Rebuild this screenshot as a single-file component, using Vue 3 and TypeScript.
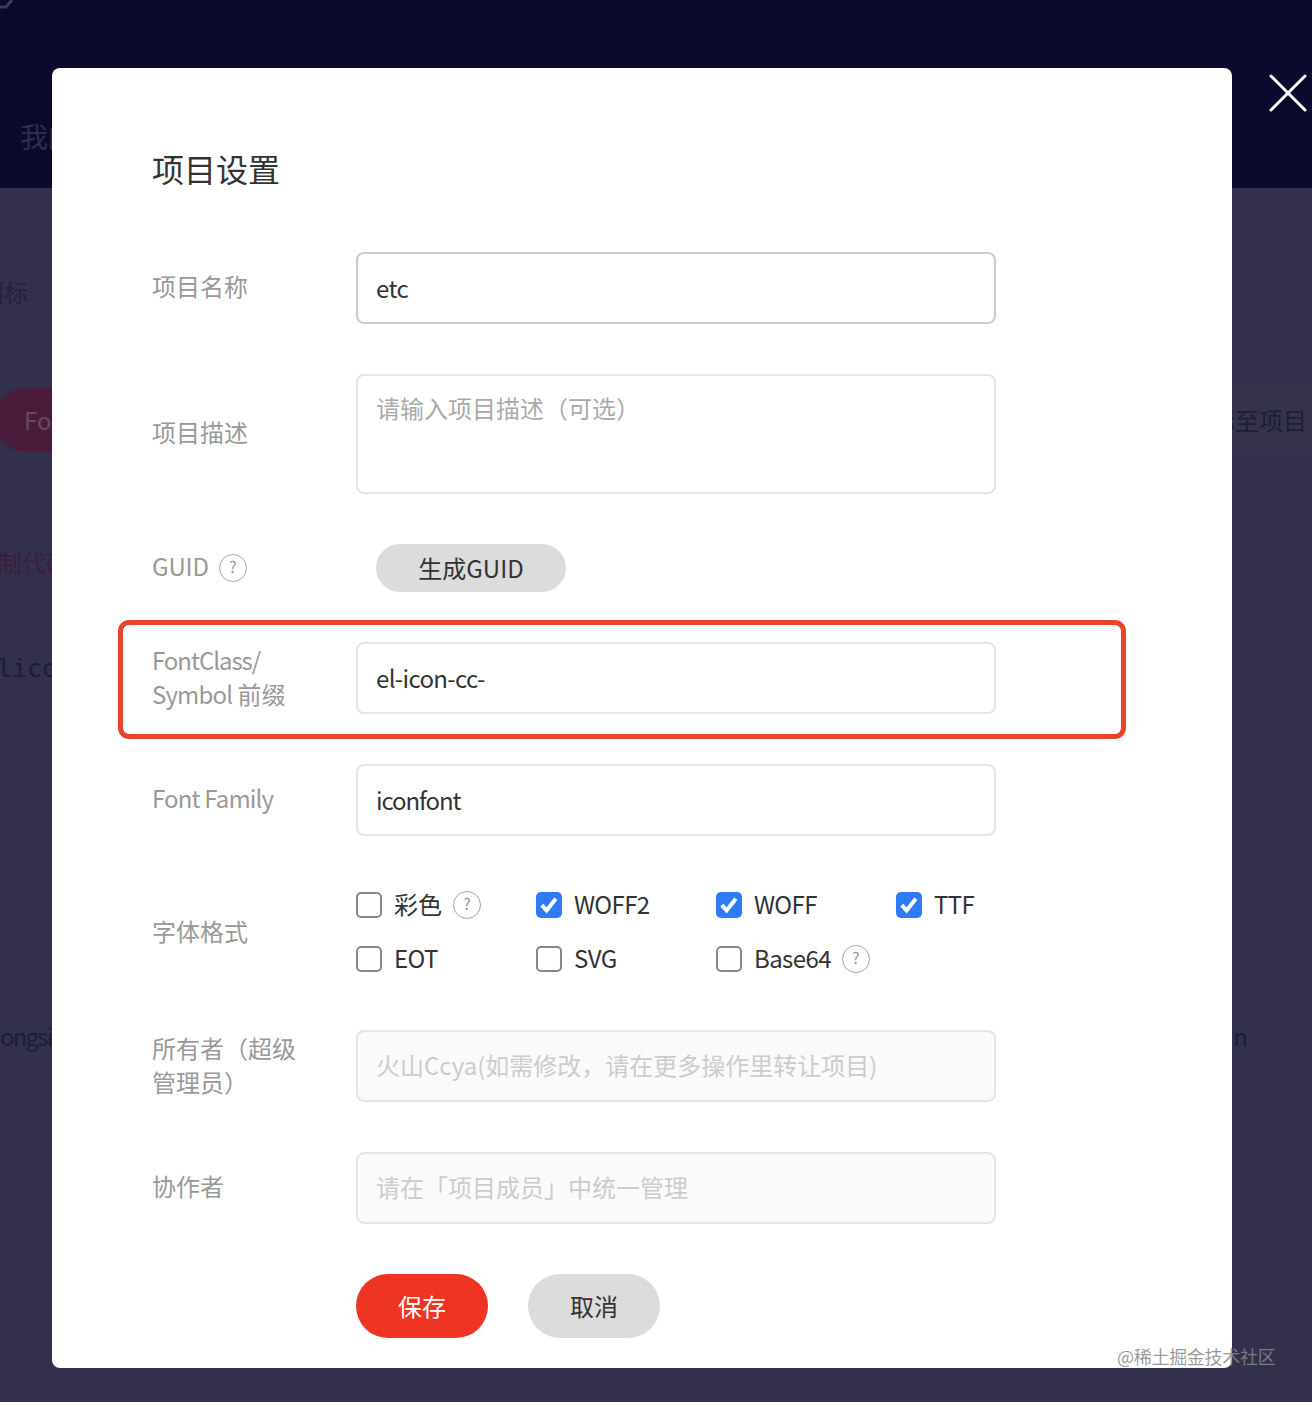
<script setup lang="ts">
import { ref } from 'vue'

interface Format {
  label: string
  checked: boolean
  help?: boolean
}

const formats = ref<Format[]>([
  { label: '彩色', checked: false, help: true },
  { label: 'WOFF2', checked: true },
  { label: 'WOFF', checked: true },
  { label: 'TTF', checked: true },
  { label: 'EOT', checked: false },
  { label: 'SVG', checked: false },
  { label: 'Base64', checked: false, help: true },
])

const isLatin = (text: string): boolean => /^[\x00-\x7f]+$/.test(text)
</script>

<template>
  <div class="page">
    <header class="bg-head">
      <svg class="bg-logo" width="14" height="10" viewBox="0 0 14 10"><path d="M0 7 H6 L12 0" fill="none" stroke="#3a3a55" stroke-width="3" /></svg>
      <span class="bg-my">我的项目</span>
    </header>
    <div class="bg-body">
      <div class="bg-row r1"><span class="frag f1">图标</span></div>
      <div class="bg-row r2">
        <span class="bg-pill">Font</span>
        <span class="bg-add">标至项目</span>
      </div>
      <div class="bg-row r3"><span class="frag f3">制代码</span></div>
      <div class="bg-row r4"><span class="frag f4">licon</span></div>
      <div class="bg-row r5">
        <span class="frag f5">ongsi</span>
        <span class="frag f6">n</span>
      </div>
    </div>

    <section class="modal">
      <h2 class="title">项目设置</h2>

      <div class="row">
        <label class="label">项目名称</label>
        <input class="field strong latin" value="etc" readonly />
      </div>

      <div class="row">
        <label class="label">项目描述</label>
        <textarea class="field area" placeholder="请输入项目描述（可选）" readonly></textarea>
      </div>

      <div class="row guid">
        <label class="label"><span class="guid-text">GUID</span><i class="help lab-help">?</i></label>
        <button class="guid-btn" type="button">生成GUID</button>
      </div>

      <div class="row marked">
        <div class="mark"></div>
        <label class="label multi"><span class="latin tight">FontClass/</span><br /><span class="latin">Symbol</span> 前缀</label>
        <input class="field latin" value="el-icon-cc-" readonly />
      </div>

      <div class="row">
        <label class="label"><span class="latin">Font Family</span></label>
        <input class="field latin narrow" value="iconfont" readonly />
      </div>

      <div class="row formats-row">
        <label class="label">字体格式</label>
        <div class="formats">
          <div v-for="f in formats" :key="f.label" class="fmt">
            <span class="box" :class="{ on: f.checked }">
              <svg v-if="f.checked" width="26" height="26" viewBox="0 0 26 26"><path d="M5.8 13.2 L10.6 18.4 L19.8 6.8" fill="none" stroke="#fff" stroke-width="4" /></svg>
            </span>
            <span class="fmt-text" :class="{ 'fmt-latin': isLatin(f.label) }">{{ f.label }}</span>
            <i v-if="f.help" class="help">?</i>
          </div>
        </div>
      </div>

      <div class="row">
        <label class="label multi">所有者（超级<br />管理员）</label>
        <input class="field off" placeholder="火山Ccya(如需修改，请在更多操作里转让项目)" readonly />
      </div>

      <div class="row">
        <label class="label">协作者</label>
        <input class="field off" placeholder="请在「项目成员」中统一管理" readonly />
      </div>

      <div class="actions">
        <button class="act save" type="button">保存</button>
        <button class="act cancel" type="button">取消</button>
      </div>
    </section>

    <svg class="close" width="40" height="40" viewBox="0 0 40 40">
      <path d="M3 3 L37 37 M37 3 L3 37" stroke="#fff" stroke-width="3" stroke-linecap="round" />
    </svg>

    <div class="watermark">@稀土掘金技术社区</div>
  </div>
</template>

<style>
html, body { margin: 0; overflow: hidden; background: #32304c; }
</style>

<style scoped>
.page {
  position: relative;
  width: 1312px;
  height: 1402px;
  overflow: hidden;
  background: #32304c;
  font-family: "Noto Sans CJK SC", "Noto Sans", sans-serif;
  font-size: 24px;
}
.bg-head {
  position: relative;
  height: 188px;
  background: #0b0a2c;
  display: flex;
  align-items: flex-end;
  padding: 0 0 32px 20px;
  box-sizing: border-box;
}
.bg-logo { position: absolute; left: 0; top: 0; }
.bg-my { color: #2f2e4a; font-size: 28px; line-height: 40px; white-space: nowrap; }
.bg-row { display: flex; justify-content: space-between; align-items: center; white-space: nowrap; }
.r1 { margin-top: 85px; height: 40px; }
.r2 { margin-top: 75px; height: 64px; }
.r3 { margin-top: 91px; height: 40px; }
.r4 { margin-top: 65px; height: 40px; }
.r5 { margin-top: 330px; height: 40px; }
.frag { color: #26254a; padding-bottom: 4px; }
.f1 { margin-left: -20px; color: #24233f; }
.f3 { margin-left: -2px; color: #3c1e3f; }
.f4 { margin-left: -3px; padding-bottom: 0; color: #1d1c3b; font-family: "DejaVu Sans Mono", monospace; font-size: 25px; }
.f5 { color: #1d1c3b; margin-left: 0; letter-spacing: -1.8px; padding-bottom: 6px; }
.f6 { color: #1d1c3b; margin-right: 64px; padding-bottom: 6px; }
.bg-pill {
  width: 120px;
  height: 64px;
  margin-left: -6px;
  padding-left: 30px;
  box-sizing: border-box;
  border-radius: 32px;
  background: #4a1b3b;
  color: #664a62;
  line-height: 64px;
}
.bg-add {
  width: 180px;
  height: 64px;
  padding-right: 5px;
  box-sizing: border-box;
  background: #35334b;
  color: #1f1e3a;
  line-height: 64px;
  text-align: right;
}
.modal {
  position: absolute;
  left: 52px;
  top: 68px;
  width: 1180px;
  height: 1300px;
  box-sizing: border-box;
  padding: 77px 0 0 100px;
  background: #fff;
  border-radius: 8px;
}
.title {
  margin: 0 0 61px;
  font-size: 32px;
  font-weight: 400;
  line-height: 46px;
  color: #333;
}
.row {
  position: relative;
  display: flex;
  align-items: center;
  margin-bottom: 50px;
}
.label {
  display: flex;
  align-items: center;
  flex-wrap: wrap;
  width: 204px;
  flex: none;
  box-sizing: border-box;
  padding-bottom: 4px;
  color: #999;
  line-height: 34px;
}
.label.multi { display: block; padding-bottom: 2px; }
.latin { letter-spacing: -0.85px; }
.latin.tight { letter-spacing: -1.05px; }
.guid-text { letter-spacing: -0.15px; }
.field {
  display: block;
  width: 640px;
  height: 72px;
  box-sizing: border-box;
  padding: 0 18px 2px;
  border: 2px solid #e5e5e5;
  border-radius: 8px;
  background: #fff;
  color: #333;
  font: inherit;
  outline: none;
}
.field.latin { letter-spacing: -0.65px; }
.field.narrow { letter-spacing: -1.1px; }
.strong { border-color: #ccc; }
.area {
  height: 120px;
  padding: 15px 18px;
  line-height: 34px;
  resize: none;
}
.field::placeholder { color: #aaa; opacity: 1; }
.off { background: #fafafa; padding-bottom: 4px; }
.off::placeholder { color: #ccc; }
.guid { height: 48px; }
.guid-btn {
  margin-left: 20px;
  width: 190px;
  height: 48px;
  padding: 0 0 2px;
  border: 0;
  border-radius: 24px;
  background: #dcdcdc;
  color: #333;
  font: inherit;
}
.mark {
  position: absolute;
  left: -34px;
  top: -22px;
  width: 1008px;
  height: 119px;
  box-sizing: border-box;
  border: 5px solid #e8442b;
  border-radius: 11px;
  pointer-events: none;
}
.formats-row { height: 94px; }
.formats {
  display: grid;
  grid-template-columns: repeat(4, 180px);
  grid-auto-rows: 40px;
  row-gap: 14px;
  margin-top: -2px;
}
.fmt { display: flex; align-items: center; color: #333; white-space: nowrap; }
.fmt-text { padding-bottom: 3px; }
.fmt-latin { letter-spacing: -0.6px; }
.box {
  width: 26px;
  height: 26px;
  box-sizing: border-box;
  border: 2px solid #888;
  border-radius: 5px;
  flex: none;
  margin-right: 12px;
  position: relative;
  background: #fff;
}
.box.on { border: 0; background: #2f7bf5; }
.box svg { display: block; }
.help {
  display: inline-block;
  width: 28px;
  height: 28px;
  box-sizing: border-box;
  margin-left: 11px;
  border: 1.5px solid #a6a6a6;
  border-radius: 50%;
  color: #999;
  font-size: 16px;
  font-style: normal;
  line-height: 23px;
  text-align: center;
  flex: none;
}
.lab-help { margin-left: 10px; margin-top: 4px; }
.actions { display: flex; gap: 40px; margin-left: 204px; }
.act {
  width: 132px;
  height: 64px;
  padding: 0 0 2px;
  border: 0;
  border-radius: 32px;
  font: inherit;
}
.save { background: #ee3524; color: #fff; }
.cancel { background: #dcdcdc; color: #333; }
.close { position: absolute; left: 1268px; top: 73px; }
.watermark {
  position: absolute;
  left: 1117px;
  top: 1343px;
  color: rgba(135, 135, 140, 0.85);
  font-size: 18px;
  line-height: 26px;
  letter-spacing: -0.3px;
  white-space: nowrap;
}
</style>
